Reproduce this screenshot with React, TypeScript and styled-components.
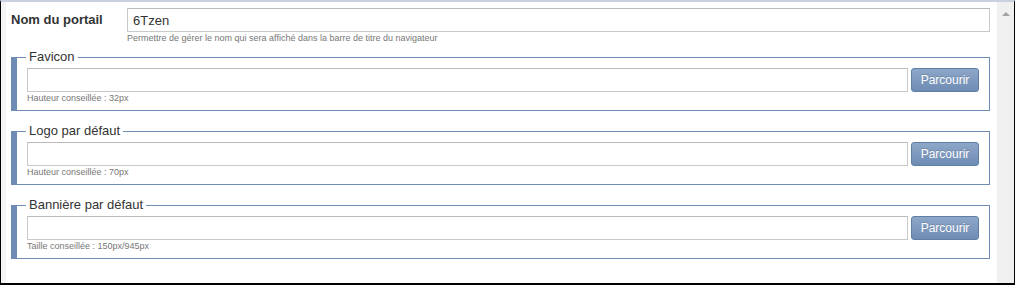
import styled, { createGlobalStyle } from "styled-components";

const GlobalStyle = createGlobalStyle`
  body {
    margin: 0;
    font-family: "Liberation Sans", Arial, sans-serif;
  }
`;

const Frame = styled.div`
  display: flex;
  width: 1015px;
  height: 285px;
  box-sizing: border-box;
  border-top: 2px solid #c8d3df;
  border-left: 1px solid #000;
  border-right: 1px solid #000;
  border-bottom: 2px solid #000;
  background: #fff;
`;

const Gutter = styled.div`
  width: 5px;
  background: #f4f4f4;
`;

const Content = styled.div`
  flex: 1;
  padding: 6px 7px 0 5px;
  background: #fff;
`;

const Scrollbar = styled.div`
  width: 17px;
  background: #f0f0f0;
  display: flex;
  flex-direction: column;
  align-items: center;
`;

const ArrowUp = styled.div`
  margin-top: 10px;
  width: 0;
  height: 0;
  border-left: 4px solid transparent;
  border-right: 4px solid transparent;
  border-bottom: 4px solid #a3a3a3;
`;

const NameRow = styled.div`
  display: grid;
  grid-template-columns: 116px 1fr;
`;

const Label = styled.label`
  font-size: 13px;
  font-weight: bold;
  line-height: 24px;
  color: #333;
`;

const TextInput = styled.input`
  box-sizing: border-box;
  flex: 1;
  min-width: 0;
  height: 24px;
  margin: 0;
  padding: 0 5px;
  border: 1px solid #c9c9c9;
  border-top-color: #b9b9b9;
  font-family: inherit;
  font-size: 13px;
  color: #333;
  outline: none;
`;

const Hint = styled.div<{ $col?: boolean }>`
  font-size: 9px;
  line-height: 12px;
  color: #777;
  grid-column: ${(p) => (p.$col ? "2" : "auto")};
`;

const Sections = styled.div`
  display: flex;
  flex-direction: column;
  gap: 12px;
  margin-top: 5px;
`;

const Fieldset = styled.fieldset`
  margin: 0;
  min-width: 0;
  padding: 3px 10px 6px 10px;
  border: 1px solid #6f8cb4;
  border-left-width: 6px;
`;

const Legend = styled.legend`
  padding: 0 3px;
  margin-left: -1px;
  font-size: 13px;
  line-height: 16px;
  color: #333;
`;

const FileRow = styled.div`
  display: flex;
  gap: 3px;
`;

const Button = styled.button`
  box-sizing: border-box;
  flex: 0 0 68px;
  height: 24px;
  margin: 0;
  padding: 0;
  border: 1px solid #5f7ea6;
  border-radius: 3px;
  background: linear-gradient(#8da7c8, #6f8cb4);
  color: #fff;
  font-family: inherit;
  font-size: 12px;
  text-shadow: 0 -1px 0 rgba(0, 0, 0, 0.15);
  cursor: pointer;
`;

const uploads = [
  { title: "Favicon", hint: "Hauteur conseillée : 32px" },
  { title: "Logo par défaut", hint: "Hauteur conseillée : 70px" },
  { title: "Bannière par défaut", hint: "Taille conseillée : 150px/945px" },
];

export default function App() {
  return (
    <>
      <GlobalStyle />
      <Frame>
        <Gutter />
        <Content>
          <NameRow>
            <Label htmlFor="portal-name">Nom du portail</Label>
            <TextInput id="portal-name" defaultValue="6Tzen" />
            <Hint $col>
              Permettre de gérer le nom qui sera affiché dans la barre de titre du navigateur
            </Hint>
          </NameRow>
          <Sections>
            {uploads.map((u) => (
              <Fieldset key={u.title}>
                <Legend>{u.title}</Legend>
                <FileRow>
                  <TextInput />
                  <Button type="button">Parcourir</Button>
                </FileRow>
                <Hint>{u.hint}</Hint>
              </Fieldset>
            ))}
          </Sections>
        </Content>
        <Scrollbar>
          <ArrowUp />
        </Scrollbar>
      </Frame>
    </>
  );
}
